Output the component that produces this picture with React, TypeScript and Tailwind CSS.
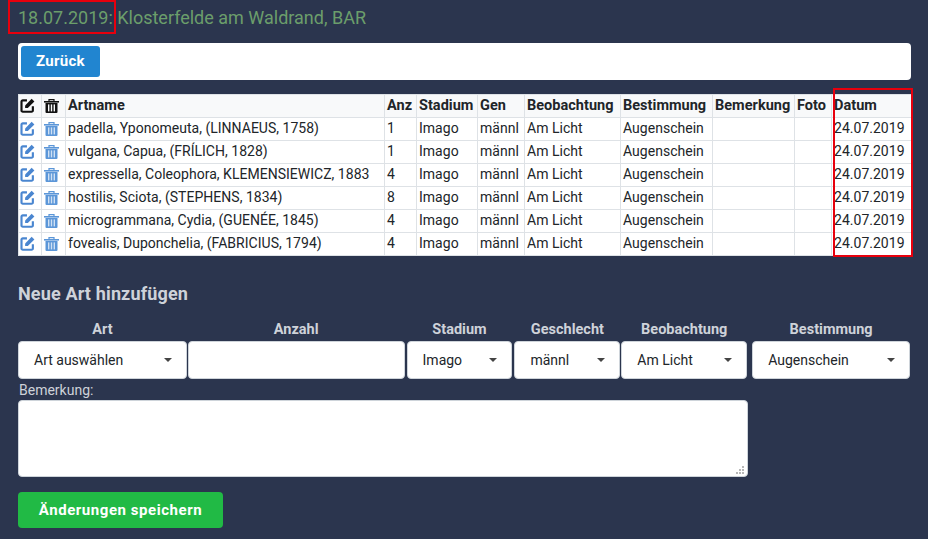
import React from "react";

const rows = [
  ["padella, Yponomeuta, (LINNAEUS, 1758)", "1"],
  ["vulgana, Capua, (FRÍLICH, 1828)", "1"],
  ["expressella, Coleophora, KLEMENSIEWICZ, 1883", "4"],
  ["hostilis, Sciota, (STEPHENS, 1834)", "8"],
  ["microgrammana, Cydia, (GUENÉE, 1845)", "4"],
  ["fovealis, Duponchelia, (FABRICIUS, 1794)", "4"],
];

const headers = [
  "Artname",
  "Anz",
  "Stadium",
  "Gen",
  "Beobachtung",
  "Bestimmung",
  "Bemerkung",
  "Foto",
  "Datum",
];

const cell = "border border-[#dee2e6] pl-[2px] pr-0 pt-0 pb-[2px] h-[23px] whitespace-nowrap overflow-hidden";
const headCell = "border border-[#dee2e6] pl-[2px] pr-0 pt-0 pb-0 h-[23px] whitespace-nowrap overflow-hidden text-left text-[14.5px] font-bold";
const iconCell = "border border-[#dee2e6] p-0 pb-[1px] h-[23px]";

function EditIcon({ className }: { className: string }) {
  return (
    <svg viewBox="0 0 14 14" className={`ml-[1px] block h-[15px] w-[15px] ${className}`}>
      <path
        d="M6.5 2.2H2.6a1.2 1.2 0 0 0-1.2 1.2v8.2a1.2 1.2 0 0 0 1.2 1.2h8.2a1.2 1.2 0 0 0 1.2-1.2V7.6"
        fill="none"
        stroke="currentColor"
        strokeWidth="2"
      />
      <path d="M4.8 9.4V6.9L10.9.8l2.5 2.5-6.1 6.1z" fill="currentColor" />
    </svg>
  );
}

function TrashIcon({ className, stripe }: { className: string; stripe: string }) {
  return (
    <svg viewBox="0 0 15 14" className={`ml-[2px] block h-[14px] w-[15px] ${className}`}>
      <path d="M5 2V.6h5V2" fill="none" stroke="currentColor" strokeWidth="1.2" />
      <rect x="0" y="2" width="15" height="1.6" fill="currentColor" />
      <path d="M1.5 4h12v9a1 1 0 0 1-1 1h-10a1 1 0 0 1-1-1z" fill="currentColor" />
      <rect x="4" y="5.4" width="1.4" height="7" className={stripe} />
      <rect x="6.8" y="5.4" width="1.4" height="7" className={stripe} />
      <rect x="9.6" y="5.4" width="1.4" height="7" className={stripe} />
    </svg>
  );
}

function FieldLabel({ children }: { children: React.ReactNode }) {
  return (
    <div className="h-[19px] text-center text-[14.5px] leading-[17px] font-bold text-[#ced2d9]">
      {children}
    </div>
  );
}

function Select({ label, value, className }: { label: string; value: string; className: string }) {
  return (
    <div className={`flex flex-col ${className}`}>
      <FieldLabel>{label}</FieldLabel>
      <div className="mt-[1px] flex h-[38px] items-center justify-between rounded-[4px] border border-[#ced4da] bg-white pl-[15px] pr-[14px] text-[14px] text-[#212529]">
        <span>{value}</span>
        <span className="h-0 w-0 border-x-[4px] border-t-[4px] border-x-transparent border-t-[#444]" />
      </div>
    </div>
  );
}

export default function App() {
  return (
    <div className="relative h-[539px] w-[928px] overflow-hidden bg-[#2b354e] px-[18px] font-['Roboto',sans-serif]">
      <h2 className="pt-[7px] text-[18px] leading-[21px] font-normal text-[#6b9e6b]">
        18.07.2019: Klosterfelde am Waldrand, BAR
      </h2>

      <div className="mt-[15px] flex h-[37px] w-[893px] items-center rounded-[4px] bg-white pl-[3px]">
        <button className="h-[31px] w-[79px] rounded-[3px] bg-[#2185d0] text-[15px] font-bold tracking-[0.3px] text-white">
          Zurück
        </button>
      </div>

      <table className="mt-[14px] w-[893px] table-fixed border-collapse bg-white text-[14px] leading-[20px] tracking-[0.02px] text-[#212529]">
        <colgroup>
          <col className="w-[23px]" />
          <col className="w-[24px]" />
          <col className="w-[319px]" />
          <col className="w-[32px]" />
          <col className="w-[61px]" />
          <col className="w-[47px]" />
          <col className="w-[96px]" />
          <col className="w-[92px]" />
          <col className="w-[82px]" />
          <col className="w-[37px]" />
          <col className="w-[80px]" />
        </colgroup>
        <thead>
          <tr className="bg-[#f8f9fa]">
            <th className={iconCell}>
              <EditIcon className="text-[#111]" />
            </th>
            <th className={iconCell}>
              <TrashIcon className="text-[#111]" stripe="fill-[#f8f9fa]" />
            </th>
            {headers.map((h) => (
              <th key={h} className={headCell}>
                {h}
              </th>
            ))}
          </tr>
        </thead>
        <tbody>
          {rows.map(([name, anz]) => (
            <tr key={name}>
              <td className={iconCell}>
                <EditIcon className="text-[#4a86d0]" />
              </td>
              <td className={iconCell}>
                <TrashIcon className="text-[#5b96d8]" stripe="fill-[#cfe0f4]" />
              </td>
              <td className={cell}>{name}</td>
              <td className={cell}>{anz}</td>
              <td className={cell}>Imago</td>
              <td className={cell}>männl</td>
              <td className={cell}>Am Licht</td>
              <td className={cell}>Augenschein</td>
              <td className={cell}></td>
              <td className={cell}></td>
              <td className={cell}>24.07.2019</td>
            </tr>
          ))}
        </tbody>
      </table>

      <h3 className="mt-[27px] text-[18px] leading-[22px] tracking-[0.15px] font-bold text-[#ced2d9]">
        Neue Art hinzufügen
      </h3>

      <div className="mt-[16px] flex">
        <Select label="Art" value="Art auswählen" className="w-[169px]" />
        <div className="ml-[1px] flex w-[217px] flex-col">
          <FieldLabel>Anzahl</FieldLabel>
          <input className="mt-[1px] h-[38px] rounded-[4px] border border-[#ced4da] bg-white" />
        </div>
        <Select label="Stadium" value="Imago" className="ml-[2px] w-[106px]" />
        <Select label="Geschlecht" value="männl" className="ml-[2px] w-[106px]" />
        <Select label="Beobachtung" value="Am Licht" className="ml-[1px] w-[126px]" />
        <Select label="Bestimmung" value="Augenschein" className="ml-[5px] w-[158px]" />
      </div>

      <label className="mt-[3px] block pl-[1px] text-[14px] leading-[17px] text-[#ced2d9]">
        Bemerkung:
      </label>
      <div className="relative mt-[1px] h-[77px] w-[730px]">
        <textarea className="block h-full w-full resize-none rounded-[4px] border border-[#ced4da] bg-white" />
        {/* resize grip */}
        <svg viewBox="0 0 8 8" className="absolute bottom-[3px] right-[4px] h-[8px] w-[8px] fill-[#b8b8b8]">
          <rect x="6" y="0" width="2" height="2" />
          <rect x="3" y="3" width="2" height="2" />
          <rect x="6" y="3" width="2" height="2" />
          <rect x="0" y="6" width="2" height="2" />
          <rect x="3" y="6" width="2" height="2" />
          <rect x="6" y="6" width="2" height="2" />
        </svg>
      </div>

      <button className="mt-[15px] h-[36px] w-[205px] rounded-[4px] bg-[#21ba45] text-[15px] font-bold tracking-[0.55px] text-white">
        Änderungen speichern
      </button>

      {/* red marker boxes over the screenshot */}
      <div className="absolute left-[8px] top-0 h-[34px] w-[108px] border-2 border-[#e8000d]" />
      <div className="absolute left-[833px] top-[88px] h-[169px] w-[80px] border-2 border-[#e8000d]" />
    </div>
  );
}
